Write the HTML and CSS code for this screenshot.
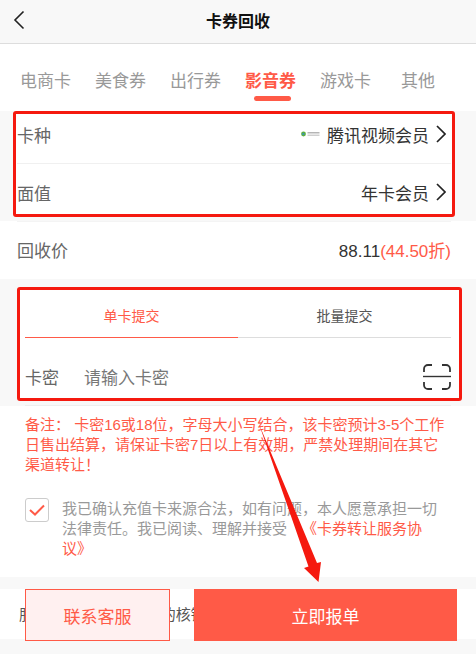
FILE: index.html
```html
<!DOCTYPE html>
<html lang="zh">
<head>
<meta charset="utf-8">
<title>卡券回收</title>
<link rel="stylesheet" href="styles.css">
</head>
<body>
<div class="page">
  <header class="nav">
    <svg class="back" width="12" height="20" viewBox="0 0 12 20"><path d="M10.500 1.500 2 10l8.500 8.500" fill="none" stroke="#222" stroke-width="1.600"/></svg>
    <h1 class="nav-title">卡券回收</h1>
  </header>
  <nav class="cats">
    <span class="cat">电商卡</span>
    <span class="cat">美食券</span>
    <span class="cat">出行券</span>
    <span class="cat cat-active">影音券</span>
    <span class="cat">游戏卡</span>
    <span class="cat cat-last">其他</span>
  </nav>
  <section class="box box-select">
    <div class="row row-first">
      <span class="label">卡种</span>
      <span class="value">
        <svg class="brand" width="19" height="6" viewBox="0 0 19 6"><circle cx="2.500" cy="3" r="2.400" fill="#5cae3c"/><path d="M1.500 1.700 4 3 1.500 4.300z" fill="#2f8fd8"/><rect x="6.500" y="1" width="12" height="1.500" fill="#b5b5b5"/><rect x="6.500" y="3.500" width="12" height="1.500" fill="#cfcfcf"/></svg>
        腾讯视频会员
        <svg class="chev" width="10" height="18" viewBox="0 0 10 18"><path d="M1 1 9 9l-8 8" fill="none" stroke="#222" stroke-width="1.700"/></svg>
      </span>
    </div>
    <div class="row row-second">
      <span class="label">面值</span>
      <span class="value">年卡会员
        <svg class="chev" width="10" height="18" viewBox="0 0 10 18"><path d="M1 1 9 9l-8 8" fill="none" stroke="#222" stroke-width="1.700"/></svg>
      </span>
    </div>
  </section>
  <div class="price">
    <span class="label">回收价</span>
    <span class="price-val">88.11<em class="price-off">(44.50折)</em></span>
  </div>
  <div class="gap"></div>
  <section class="box box-form">
    <div class="tabs">
      <span class="tab tab-active">单卡提交</span>
      <span class="tab">批量提交</span>
    </div>
    <div class="input-row">
      <span class="label">卡密</span>
      <span class="placeholder">请输入卡密</span>
      <svg class="scan" width="28" height="26" viewBox="0 0 28 26" fill="none" stroke="#333" stroke-width="1.800"><path d="M1 8V5a4 4 0 0 1 4-4h4M19 1h4a4 4 0 0 1 4 4v3M1 18v3a4 4 0 0 0 4 4h4M19 25h4a4 4 0 0 0 4-4v-3"/><path d="M0 12.500h28" stroke-width="1.400"/></svg>
    </div>
  </section>
  <div class="rule"></div>
  <p class="note">备注： 卡密16或18位，字母大小写结合，该卡密预计3-5个工作日售出结算，请保证卡密7日以上有效期，严禁处理期间在其它渠道转让！</p>
  <div class="agree">
    <span class="check"><svg width="16" height="12" viewBox="0 0 16 12"><path d="M1 6l5 4.500L15 1.500" fill="none" stroke="#ff5a47" stroke-width="2"/></svg></span>
    <p class="agree-text">我已确认充值卡来源合法，如有问题，本人愿意承担一切法律责任。我已阅读、理解并接受<a class="agree-link">《卡券转让服务协议》</a></p>
  </div>
  <div class="gap gap-bottom"></div>
  <footer class="foot">
    <p class="foot-text">服务商将在提交后1天的核销</p>
    <div class="foot-btns">
      <button class="btn btn-ghost">联系客服</button>
      <button class="btn btn-solid">立即报单</button>
    </div>
  </footer>
  <svg class="arrow" width="476" height="654" viewBox="0 0 476 654"><path d="M259 424 L317 563 L321 562 L318.500 582 L304 568 L308.500 566.500 Z" fill="#f5190f"/></svg>
</div>
</body>
</html>
```
FILE: styles.css
```css
* { box-sizing: border-box; }
html, body { margin: 0; padding: 0; }
body { font-family: "Liberation Sans", "Noto Sans CJK SC", sans-serif; background: #fff; color: #333; }
.page { position: relative; width: 476px; height: 654px; overflow: hidden; background: #f8f8f8; }

.nav { height: 44px; padding-bottom: 3px; background: #f8f8f8; border-bottom: 1px solid #ddd; display: flex; align-items: center; justify-content: center; position: relative; }
.nav-title { margin: 0; font-size: 16px; font-weight: 700; color: #111; }
.back { position: absolute; left: 13px; top: 10px; }

.cats { height: 67px; display: flex; padding: 20px 0 0 20px; background: #fff; }
.cat { font-size: 17px; line-height: 35px; color: #999; width: 75px; height: 37px; position: relative; }
.cat-active { color: #ff5a47; font-weight: 700; }
.cat-active::after { content: ""; position: absolute; left: 9px; top: 32px; width: 37px; height: 5px; border-radius: 3px; background: #ff5a47; }
.cat-last { padding-left: 6px; }

.box { border: 3px solid #f5190f; border-radius: 3px; background: #fff; }
.box-select { width: 442px; height: 106px; margin-left: 13px; padding: 0 6px 0 1px; }
.row { display: flex; justify-content: space-between; align-items: center; }
.row-first { height: 50px; padding-bottom: 9px; margin-right: -5px; padding-right: 5px; border-bottom: 1px solid #f0f0f0; }
.row-second { height: 50px; padding-top: 6px; }
.label { font-size: 17px; color: #666; }
.value { display: flex; align-items: center; font-size: 17px; color: #333; }
.brand { margin-right: 7px; }
.chev { margin-left: 7px; }

.price { height: 58px; margin-top: 4px; padding: 0 25px 2px 17px; background: #fff; display: flex; justify-content: space-between; align-items: center; position: relative; }
.price::before { content: ""; position: absolute; left: 17px; right: 25px; top: 0; height: 1px; background: #f4f4f4; }
.price-val { font-size: 17px; color: #333; }
.price-off { font-style: normal; color: #ff5a47; }

.gap { height: 8px; background: #f8f8f8; }
.box-form { width: 445px; height: 114px; margin-left: 17px; padding: 0 8px 0 5px; }
.tabs { display: flex; height: 48px; }
.tab { flex: 1; display: flex; align-items: center; justify-content: center; padding-top: 3px; font-size: 14px; color: #555; border-bottom: 1px solid #ddd; }
.tab-active { color: #ff5a47; border-bottom-color: #ff5a47; }
.input-row { display: flex; align-items: center; height: 60px; padding-top: 16px; }
.input-row .label { margin-right: 25px; }
.placeholder { flex: 1; font-size: 17px; color: #777; }
.scan { margin-top: 2px; }

.rule { height: 1px; margin: 4px 25px 0; background: #eee; }
.note { margin: 0; padding: 9px 25px 0; font-size: 15px; line-height: 20px; color: #ff5a47; background: #fff; }
.agree { display: flex; padding: 23px 34px 0 25px; height: 102px; background: #fff; }
.check { width: 24px; height: 24px; border: 1px solid #ccc; border-radius: 3px; display: flex; align-items: center; justify-content: center; flex: none; }
.agree-text { margin: 1px 0 0 13px; font-size: 15px; line-height: 20px; color: #999; }
.agree-link { color: #ff5a47; margin-left: 15px; }

.gap-bottom { height: 12px; }
.foot { height: 50px; position: relative; background: #fff; }
.foot-text { margin: 0; padding-left: 19px; font-size: 15px; letter-spacing: -0.15px; line-height: 52px; color: #555; white-space: nowrap; }
.foot-btns { position: absolute; left: 25px; top: 0; display: flex; gap: 24px; }
.btn { height: 52px; font-family: inherit; font-size: 17px; border-radius: 0; padding: 0; }
.btn-ghost { width: 145px; background: #fff0f0; border: 1px solid #ff5a47; color: #ff5a47; }
.btn-solid { width: 263px; background: #ff5a47; border: 0; color: #fff; }
.arrow { position: absolute; left: 0; top: 0; pointer-events: none; }
```
